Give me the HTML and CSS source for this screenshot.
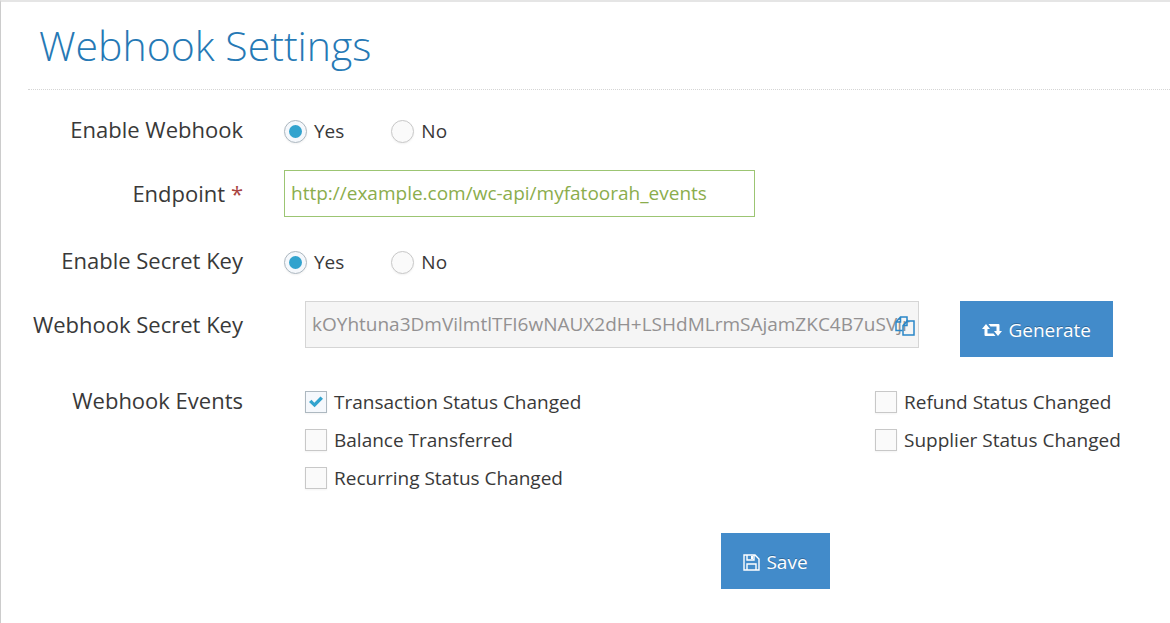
FILE: index.html
```html
<!DOCTYPE html>
<html lang="en">
<head>
    <meta charset="UTF-8">
    <meta name="viewport" content="width=device-width, initial-scale=1.0">
    <title>Webhook Settings</title>
    <link rel="stylesheet" href="styles.css">
</head>
<body>
    <main class="page-content">
        <div class="page-header">
            <h1>Webhook Settings</h1>
        </div>

        <form id="webhookForm">
            <div class="form-group" role="radiogroup" aria-labelledby="enableLabel">
                <span class="control-label" id="enableLabel">Enable Webhook</span>
                <div class="radio-list">
                    <label class="option"><input type="radio" name="enableWebhook" value="yes" checked> Yes</label>
                    <label class="option"><input type="radio" name="enableWebhook" value="no"> No</label>
                </div>
            </div>

            <div class="form-group endpoint-group">
                <label class="control-label" for="endpoint">Endpoint <span class="required">*</span></label>
                <input type="text" class="form-control valid" id="endpoint" name="endpoint" value="http://example.com/wc-api/myfatoorah_events" required>
            </div>

            <div class="form-group" role="radiogroup" aria-labelledby="secretLabel">
                <span class="control-label" id="secretLabel">Enable Secret Key</span>
                <div class="radio-list">
                    <label class="option"><input type="radio" name="enableSecret" value="yes" checked> Yes</label>
                    <label class="option"><input type="radio" name="enableSecret" value="no"> No</label>
                </div>
            </div>

            <div class="form-group secret-group">
                <label class="control-label" for="secretKey">Webhook Secret Key</label>
                <div class="secret-row">
                    <div class="key-box">
                        <input type="text" class="form-control" id="secretKey" name="secretKey" value="kOYhtuna3DmVilmtlTFI6wNAUX2dH+LSHdMLrmSAjamZKC4B7uSVjr" readonly>
                        <button type="button" class="copy-btn" aria-label="Copy">
                            <svg width="20" height="20" viewBox="0 0 20 20" fill="none" stroke="currentColor" stroke-width="1.5">
                                <path d="M7.500 14.500H1V6L5.500 1H12V5M5.500 1V6H1"/>
                                <path d="M12 5H19V19H8V9.500L12 5V9.500H8"/>
                            </svg>
                        </button>
                    </div>
                    <button type="button" class="btn">
                        <svg width="20" height="14" viewBox="0 0 20 14" fill="currentColor">
                            <path d="M4 1L8 6H5.500V10.500H11.500L13.500 13H3.500Q2.500 13 2.500 12V6H0Z"/>
                            <path d="M6.500 1H16.500Q17.500 1 17.500 2V8H20L16 13L12 8H14.500V3.500H8.500Z"/>
                        </svg>
                        Generate
                    </button>
                </div>
            </div>

            <div class="form-group events-group" role="group" aria-labelledby="eventsLabel">
                <span class="control-label" id="eventsLabel">Webhook Events</span>
                <div class="event-list">
                    <label class="option"><input type="checkbox" name="events" value="transaction" checked> Transaction Status Changed</label>
                    <label class="option"><input type="checkbox" name="events" value="refund"> Refund Status Changed</label>
                    <label class="option"><input type="checkbox" name="events" value="balance"> Balance Transferred</label>
                    <label class="option"><input type="checkbox" name="events" value="supplier"> Supplier Status Changed</label>
                    <label class="option"><input type="checkbox" name="events" value="recurring"> Recurring Status Changed</label>
                </div>
            </div>

            <div class="form-actions">
                <button type="submit" class="btn">
                    <svg width="17" height="17" viewBox="0 0 17 17" fill="none" stroke="currentColor" stroke-width="1.4">
                        <path d="M1 1H12L16 5V16H1Z"/>
                        <path d="M4 1V6H11V1M4 16V10H13V16"/>
                        <path d="M8 2H10V5H8Z" fill="currentColor" stroke="none"/>
                    </svg>
                    Save
                </button>
            </div>
        </form>
    </main>
</body>
</html>
```

FILE: styles.css
```css
:root {
    --title-color: #2679b5;
    --btn-color: #428bca;
    --text-color: #393939;
    --valid-color: #8bad4c;
    --accent-color: #32a3ce;
}

* {
    box-sizing: border-box;
}

body {
    font-family: "Open Sans", sans-serif;
    font-size: 19px;
    line-height: 28px;
    color: var(--text-color);
    background: #fff;
    margin: 0;
    min-height: 100vh;
    border-top: 2px solid #e5e5e5;
    border-left: 1px solid #ccc;
}

.page-content {
    padding: 13px 0 32px 27px;
}

.page-header {
    padding: 0 11px 14px;
    margin-bottom: 23px;
    border-bottom: 1px dotted #d5d5d5;
}

h1 {
    margin: 0;
    font-size: 41px;
    font-weight: 300;
    line-height: 60px;
    color: var(--title-color);
}

.form-group {
    display: grid;
    grid-template-columns: 215px 1fr;
    column-gap: 41px;
    align-items: start;
    margin-bottom: 25px;
}

.control-label {
    font-size: 22px;
    line-height: 32px;
    text-align: right;
    white-space: nowrap;
}

.required {
    color: #a94442;
}

.radio-list {
    display: flex;
    gap: 47px;
    padding-top: 4px;
}

.option {
    display: flex;
    align-items: center;
    gap: 7px;
}

.option input {
    appearance: none;
    display: grid;
    place-content: center;
    flex: none;
    width: 22px;
    height: 22px;
    margin: 0;
    border: 1px solid #c8c8c8;
    background: #fafafa;
    box-shadow: 0 1px 2px rgba(0, 0, 0, 0.05);
}

.option input[type="radio"] {
    width: 23px;
    height: 23px;
    border-radius: 50%;
}

.option input:checked {
    border-color: #adb8c0;
    background: #f5f8fc;
}

.option input[type="radio"]:checked::before {
    content: "";
    width: 13px;
    height: 13px;
    border-radius: 50%;
    background: var(--accent-color);
}

.option input[type="checkbox"]:checked::before {
    content: "";
    width: 14px;
    height: 12px;
    background: var(--accent-color);
    clip-path: polygon(0 50%, 18% 32%, 38% 56%, 82% 4%, 100% 22%, 40% 94%);
}

.form-control {
    width: 100%;
    height: 47px;
    padding: 0 6px 2px;
    border: 1px solid #d5d5d5;
    border-radius: 0;
    font-family: inherit;
    font-size: 19px;
    color: #939192;
    background: #f5f5f5;
}

.form-control.valid {
    max-width: 471px;
    border-color: #9cc573;
    color: var(--valid-color);
    background: #fff;
}

.endpoint-group,
.secret-group {
    margin-bottom: 27px;
}

.endpoint-group .control-label,
.secret-group .control-label {
    padding-top: 7px;
}

.secret-row {
    display: flex;
    align-items: flex-start;
    gap: 41px;
    padding: 0 57px 0 21px;
}

.key-box {
    position: relative;
    flex: 1;
}

.copy-btn {
    position: absolute;
    right: 4px;
    top: 15px;
    display: flex;
    padding: 0;
    border: none;
    color: #2a87c8;
    background: none;
    cursor: pointer;
}

.btn {
    display: flex;
    align-items: center;
    gap: 6px;
    height: 56px;
    padding: 2px 22px 0;
    border: none;
    font-family: inherit;
    font-size: 19px;
    color: #fff;
    text-shadow: 0 -1px 0 rgba(0, 0, 0, 0.25);
    background: var(--btn-color);
    cursor: pointer;
}

.event-list {
    display: grid;
    grid-template-columns: 570px 1fr;
    row-gap: 10px;
    padding: 4px 0 0 21px;
}

.events-group {
    margin-bottom: 41px;
}

.form-actions {
    display: flex;
    justify-content: center;
    padding-left: 353px;
}

@media (max-width: 900px) {
    .form-group {
        grid-template-columns: 1fr;
        row-gap: 8px;
    }

    .control-label {
        text-align: left;
    }

    .event-list {
        grid-template-columns: 1fr;
    }

    .form-actions {
        padding-left: 0;
    }
}
```
